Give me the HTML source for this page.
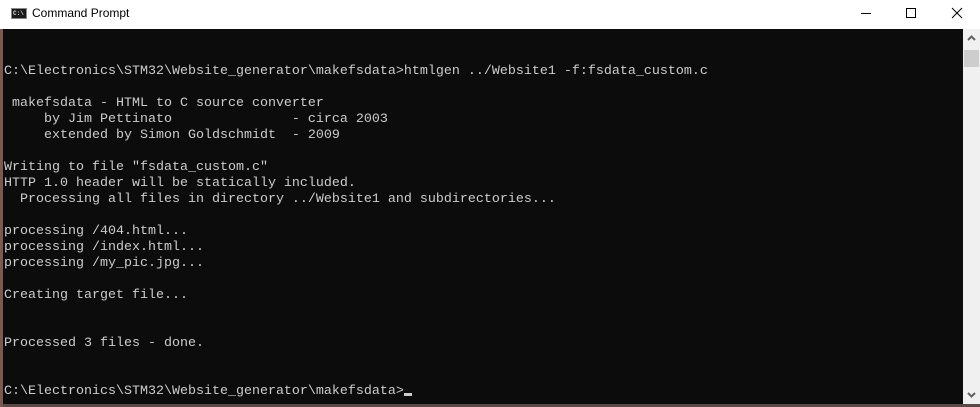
<!DOCTYPE html>
<html><head><style>
body{margin:0;width:980px;height:407px;overflow:hidden;background:#5a4a46;position:relative;font-family:"Liberation Sans",sans-serif}
#title{position:absolute;left:0;top:0;width:980px;height:29px;background:#fff}
#title .t{position:absolute;left:32px;top:6px;font-size:12px;color:#000}
#icon{position:absolute;left:11px;top:8px;width:16px;height:11px;background:#1a1a1a;border:1px solid #888;box-sizing:border-box;color:#ddd;font-size:6px;line-height:9px;font-family:"Liberation Mono",monospace;font-weight:bold;padding-left:1px}
#con{position:absolute;left:3px;top:29px;width:960px;height:375px;background:#0c0c0c;overflow:hidden}
pre{margin:0;position:absolute;left:1px;top:3px;font-family:"Liberation Mono",monospace;font-size:13.33px;line-height:16px;color:#cccccc}
#sb{position:absolute;left:963px;top:29px;width:17px;height:375px;background:#f0f0f0}
#thumb{position:absolute;left:1px;top:21px;width:15px;height:17px;background:#cdcdcd}
.cur{display:inline-block;width:8px;height:3px;background:#ccc;vertical-align:-2px}
#left{position:absolute;left:0;top:29px;width:3px;height:378px;background:#7a5a50}
</style></head><body>
<div id="title"><div id="icon">C:\</div><div class="t">Command Prompt</div>
<svg style="position:absolute;left:850px;top:6px" width="130" height="16">
<line x1="11" y1="7.5" x2="21" y2="7.5" stroke="#000" stroke-width="1"/>
<rect x="56.5" y="2.5" width="9" height="9" fill="none" stroke="#000"/>
<line x1="102" y1="2" x2="112" y2="12" stroke="#000"/><line x1="112" y1="2" x2="102" y2="12" stroke="#000"/>
</svg></div>
<div id="left"></div>
<div id="con"><pre>


C:\Electronics\STM32\Website_generator\makefsdata>htmlgen ../Website1 -f:fsdata_custom.c

 makefsdata - HTML to C source converter
     by Jim Pettinato               - circa 2003
     extended by Simon Goldschmidt  - 2009

Writing to file "fsdata_custom.c"
HTTP 1.0 header will be statically included.
  Processing all files in directory ../Website1 and subdirectories...

processing /404.html...
processing /index.html...
processing /my_pic.jpg...

Creating target file...


Processed 3 files - done.


C:\Electronics\STM32\Website_generator\makefsdata&gt;<span class="cur"></span></pre></div>
<div id="sb"><div id="thumb"></div>
<svg style="position:absolute;left:4px;top:6px" width="9" height="6"><path d="M1 5L4.5 1.5L8 5" fill="none" stroke="#606060" stroke-width="2"/></svg>
<svg style="position:absolute;left:4px;top:363px" width="9" height="6"><path d="M1 1L4.5 4.5L8 1" fill="none" stroke="#606060" stroke-width="2"/></svg>
</div>
</body></html>
